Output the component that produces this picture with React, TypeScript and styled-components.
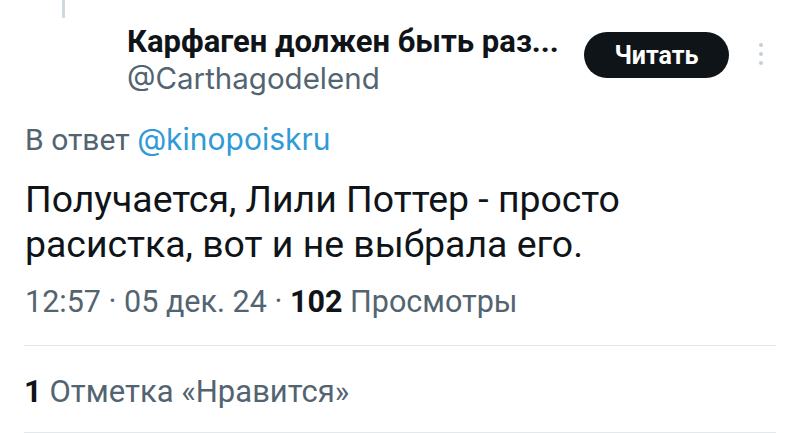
import React from 'react'
import styled, { createGlobalStyle } from 'styled-components'

const GlobalStyle = createGlobalStyle`
    html, body {
        margin: 0;
        padding: 0;
        background: #ffffff;
    }

    body {
        font-family: Roboto, "Noto Sans", sans-serif;
        color: #0f1419;
        -webkit-font-smoothing: antialiased;
    }
`

const StyledTweet = styled.article`
    width: 800px;
    height: 433px;
    overflow: hidden;
    display: flex;
    flex-direction: column;
`

const StyledThreadLine = styled.div`
    width: 3px;
    height: 18px;
    margin-left: 62px;
    background-color: #cfd9de;
`

const StyledHeader = styled.header`
    display: flex;
    align-items: flex-start;
    margin-top: 6px;
    padding-left: 127px;
`

const StyledAuthor = styled.div`
    display: flex;
    flex-direction: column;
    width: 457px;
`

const StyledName = styled.span`
    font-size: 31px;
    line-height: 36px;
    font-weight: 700;
    white-space: nowrap;
`

const StyledHandle = styled.span`
    font-family: Inter, Roboto, sans-serif;
    font-size: 29.5px;
    line-height: 36px;
    color: #536471;
`

const StyledFollowButton = styled.button`
    width: 145px;
    height: 46px;
    margin-top: 8px;
    border: none;
    border-radius: 23px;
    background-color: #0f1419;
    color: #ffffff;
    font-family: Roboto, sans-serif;
    font-size: 25px;
    font-weight: 700;
    cursor: pointer;
`

const StyledMore = styled.div`
    display: flex;
    flex-direction: column;
    gap: 5px;
    margin: 19px 0 0 30px;
`

const StyledDot = styled.span`
    width: 4px;
    height: 4px;
    border-radius: 50%;
    background-color: #c4cfd6;
`

const StyledBody = styled.div`
    padding: 0 24px 0 25px;
    display: flex;
    flex-direction: column;
`

const StyledReplyTo = styled.p`
    margin: 25px 0 0;
    font-size: 30px;
    line-height: 36px;
    color: #536471;
`

const StyledMention = styled.a`
    font-family: Inter, Roboto, sans-serif;
    font-size: 30px;
    color: #2f9ad6;
    text-decoration: none;
`

const StyledText = styled.p`
    margin: 19px 0 0;
    font-size: 37.4px;
    line-height: 45px;
    width: 660px;
`

const StyledMeta = styled.p`
    margin: 17px 0 0;
    font-size: 30.5px;
    line-height: 36px;
    color: #536471;
`

const StyledStrong = styled.strong`
    color: #0f1419;
    font-weight: 700;
`

const StyledDivider = styled.hr<{ $top: number }>`
    margin: ${({ $top }) => `${$top}px`} 24px 0 24px;
    border: none;
    border-top: 1px solid #e3e8eb;
`

const StyledLikes = styled.p`
    margin: 28px 0 0 24px;
    font-size: 31px;
    line-height: 36px;
    color: #536471;
`

export default function App() {
    return (
        <>
            <GlobalStyle />
            <StyledTweet>
                <StyledThreadLine />
                <StyledHeader>
                    <StyledAuthor>
                        <StyledName>Карфаген должен быть раз...</StyledName>
                        <StyledHandle>@Carthagodelend</StyledHandle>
                    </StyledAuthor>
                    <StyledFollowButton>Читать</StyledFollowButton>
                    <StyledMore>
                        <StyledDot />
                        <StyledDot />
                        <StyledDot />
                    </StyledMore>
                </StyledHeader>
                <StyledBody>
                    <StyledReplyTo>
                        В ответ <StyledMention href="#">@kinopoiskru</StyledMention>
                    </StyledReplyTo>
                    <StyledText>Получается, Лили Поттер - просто расистка, вот и не выбрала его.</StyledText>
                    <StyledMeta>
                        12:57 · 05 дек. 24 · <StyledStrong>102</StyledStrong> Просмотры
                    </StyledMeta>
                </StyledBody>
                <StyledDivider $top={25} />
                <StyledLikes>
                    <StyledStrong>1</StyledStrong> Отметка «Нравится»
                </StyledLikes>
                <StyledDivider $top={22} />
            </StyledTweet>
        </>
    )
}
